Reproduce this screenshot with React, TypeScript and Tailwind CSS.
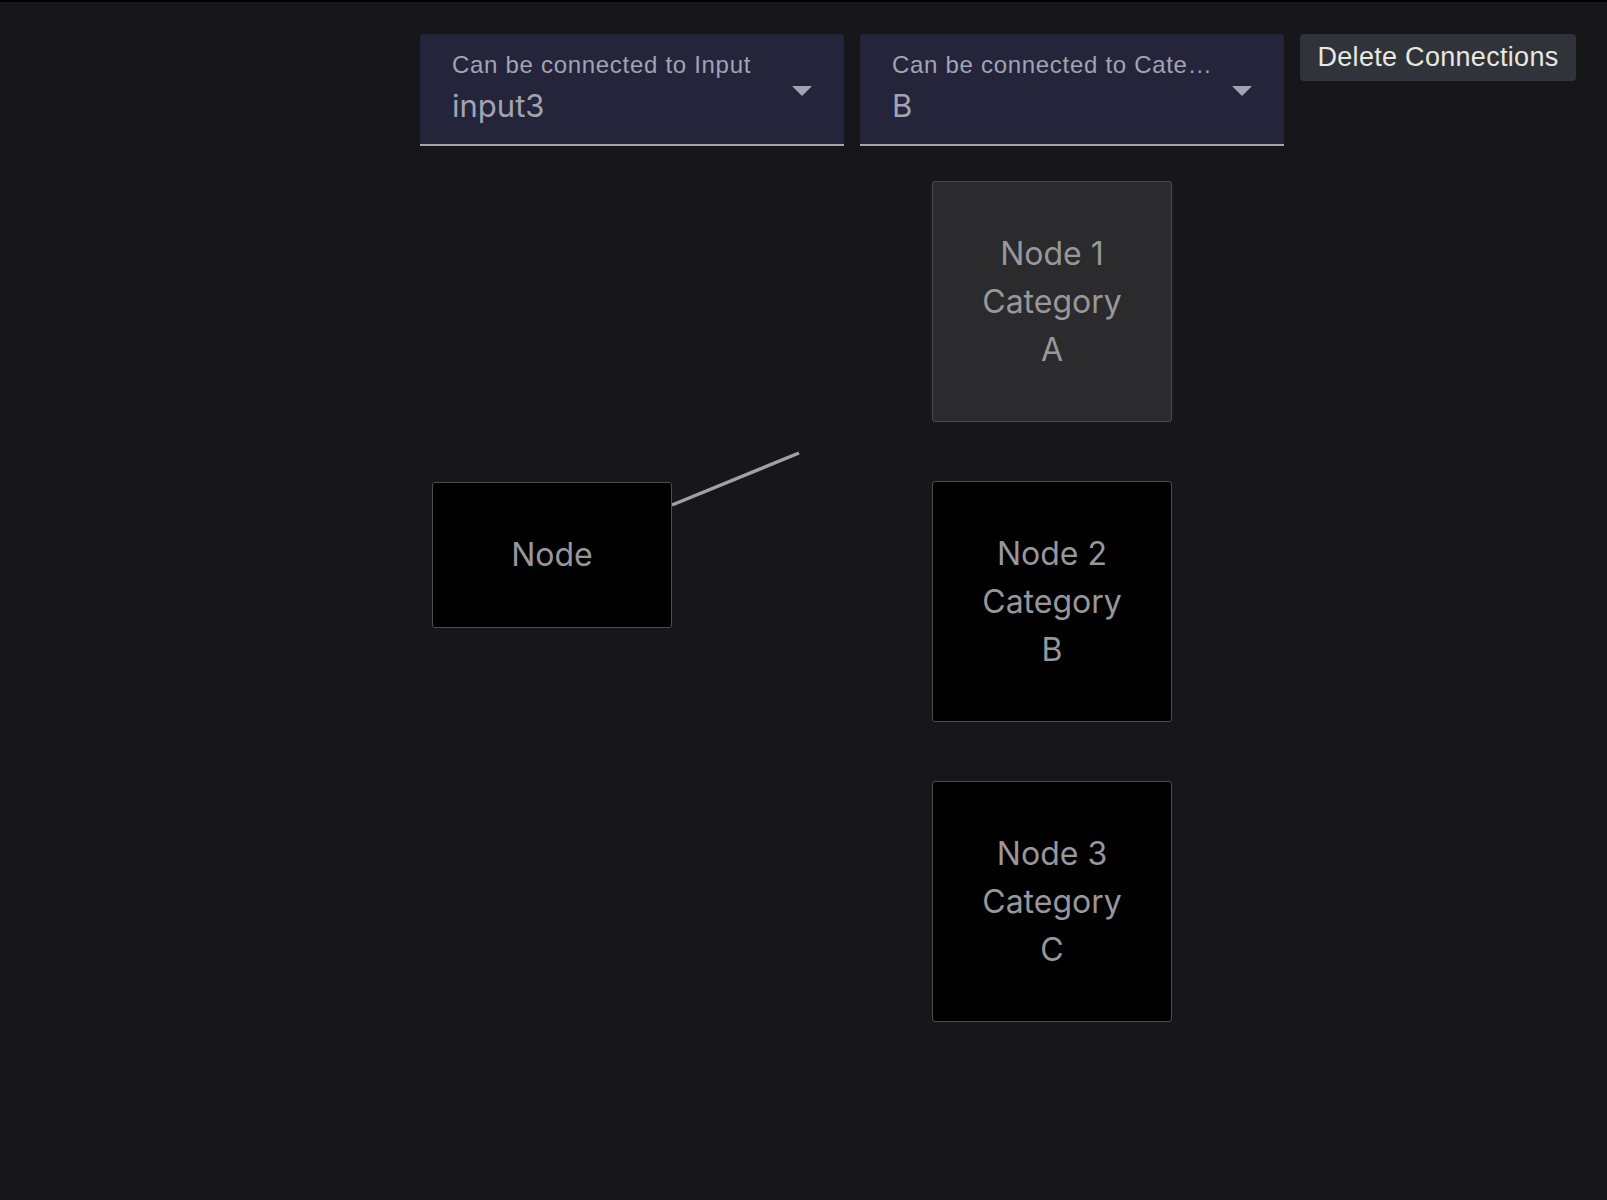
import { useState } from 'react';

interface GraphNode {
  id: string;
  lines: string[];
  x: number;
  y: number;
  w: number;
  h: number;
  active?: boolean;
}

const nodes: GraphNode[] = [
  { id: 'src', lines: ['Node'], x: 432, y: 336, w: 240, h: 146 },
  { id: 'n1', lines: ['Node 1', 'Category', 'A'], x: 932, y: 35, w: 240, h: 241, active: true },
  { id: 'n2', lines: ['Node 2', 'Category', 'B'], x: 932, y: 335, w: 240, h: 241 },
  { id: 'n3', lines: ['Node 3', 'Category', 'C'], x: 932, y: 635, w: 240, h: 241 },
];

const FilledSelect = ({ label, value }: { label: string; value: string }) => (
  <div className="flex items-start w-[424px] h-[112px] bg-[#24243b] rounded-t-[4px] border-b-2 border-[#a4a4ae] text-[#a3a3b2]">
    <div className="flex-1 min-w-0 pl-8 pt-[17px]">
      <div className="max-w-[322px] truncate text-[24px] leading-[28px] tracking-[0.7px] font-['Liberation_Sans',Arial,sans-serif]">
        {label}
      </div>
      <div className="mt-[9px] text-[31px] leading-[36px] font-[Inter,sans-serif]">{value}</div>
    </div>
    <svg className="mt-[52px] mr-8 shrink-0" width="20" height="10" viewBox="0 0 20 10">
      <path d="M0 0 L20 0 L10 10 Z" fill="#a3a3b2" />
    </svg>
  </div>
);

export default function App() {
  const [connections] = useState([{ x1: 672, y1: 359, x2: 799, y2: 307 }]);

  return (
    <div className="min-h-[1200px] bg-[#17171a] border-t-2 border-black">
      <div className="flex justify-end items-start gap-4 pt-8 pr-[31px]">
        <FilledSelect label="Can be connected to Input" value="input3" />
        <FilledSelect label="Can be connected to Categories" value="B" />
        <button className="w-[276px] h-[47px] rounded-[4px] bg-[#31333b] text-[#e8e8df] text-[27px] leading-none tracking-[0.3px] font-['Liberation_Sans',Arial,sans-serif]">
          Delete Connections
        </button>
      </div>

      {/* graph canvas */}
      <div className="relative h-[1020px]">
        <svg className="absolute inset-0 pointer-events-none" width="1607" height="1020">
          {connections.map((c, i) => (
            <line key={i} x1={c.x1} y1={c.y1} x2={c.x2} y2={c.y2} stroke="#a0a0a5" strokeWidth="3.5" />
          ))}
        </svg>
        {nodes.map((n) => (
          <div
            key={n.id}
            className={
              'absolute flex flex-col items-center justify-center rounded-[3px] border border-[#4b4b50] text-[#97979c] text-[32px] leading-[48px] font-[Inter,sans-serif] ' +
              (n.active ? 'bg-[#2b2b2e]' : 'bg-black')
            }
            style={{ left: n.x, top: n.y, width: n.w, height: n.h }}
          >
            {n.lines.map((l) => (
              <span key={l}>{l}</span>
            ))}
          </div>
        ))}
      </div>
    </div>
  );
}
